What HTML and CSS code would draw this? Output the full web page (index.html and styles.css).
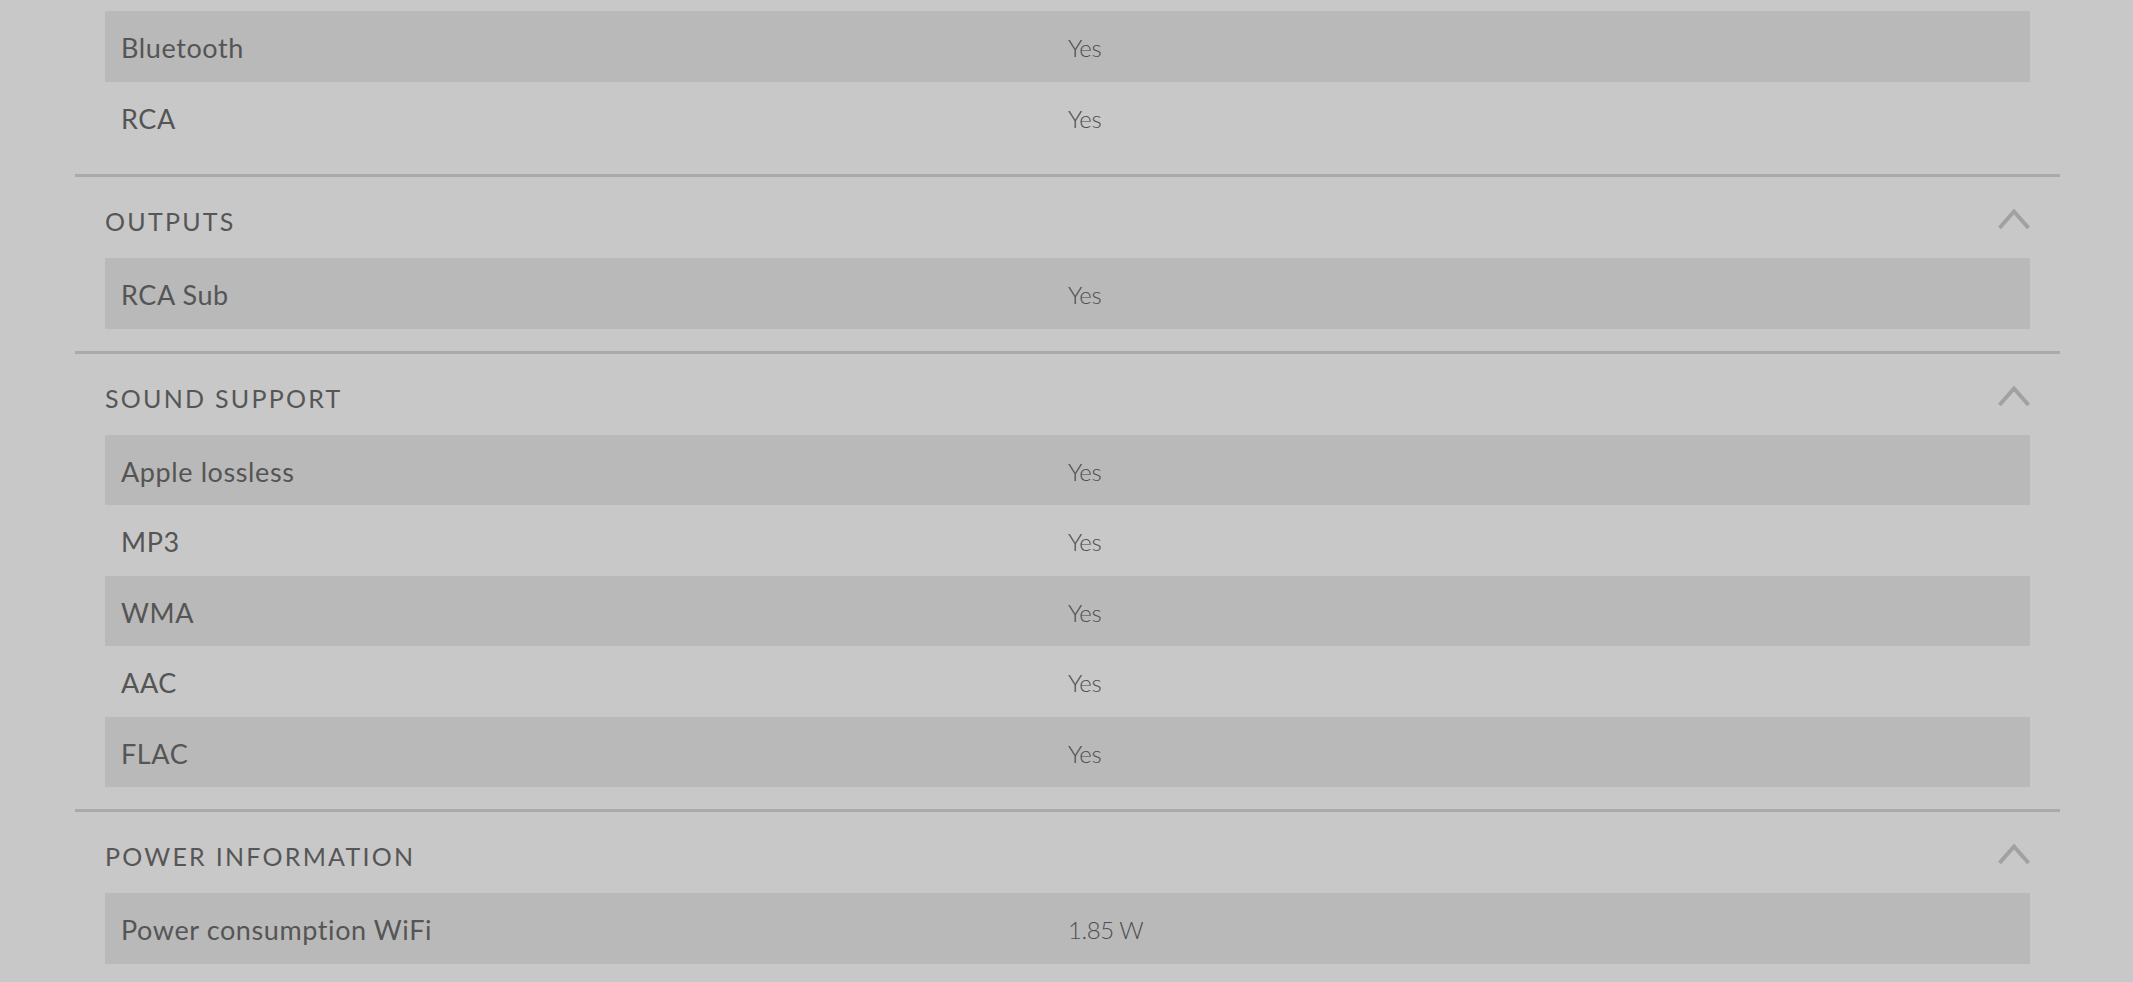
FILE: index.html
```html
<!DOCTYPE html>
<html lang="en">
<head>
<meta charset="utf-8">
<title>Specifications</title>
<link rel="stylesheet" href="styles.css">
</head>
<body>
<main class="specs">
  <section class="group group--first">
    <div class="rows">
      <div class="row"><span class="label">Bluetooth</span><span class="value">Yes</span></div>
      <div class="row"><span class="label">RCA</span><span class="value">Yes</span></div>
    </div>
  </section>

  <section class="group">
    <header class="group-head">
      <h3 class="group-title">Outputs</h3>
      <svg class="chev" viewBox="0 0 32 30" width="32" height="30" aria-hidden="true"><path d="M1.5 22 L16 5.5 L30.5 22"/></svg>
    </header>
    <div class="rows">
      <div class="row"><span class="label">RCA Sub</span><span class="value">Yes</span></div>
    </div>
  </section>

  <section class="group">
    <header class="group-head">
      <h3 class="group-title">Sound support</h3>
      <svg class="chev" viewBox="0 0 32 30" width="32" height="30" aria-hidden="true"><path d="M1.5 22 L16 5.5 L30.5 22"/></svg>
    </header>
    <div class="rows">
      <div class="row"><span class="label">Apple lossless</span><span class="value">Yes</span></div>
      <div class="row"><span class="label">MP3</span><span class="value">Yes</span></div>
      <div class="row"><span class="label">WMA</span><span class="value">Yes</span></div>
      <div class="row"><span class="label">AAC</span><span class="value">Yes</span></div>
      <div class="row"><span class="label">FLAC</span><span class="value">Yes</span></div>
    </div>
  </section>

  <section class="group">
    <header class="group-head">
      <h3 class="group-title">Power information</h3>
      <svg class="chev" viewBox="0 0 32 30" width="32" height="30" aria-hidden="true"><path d="M1.5 22 L16 5.5 L30.5 22"/></svg>
    </header>
    <div class="rows">
      <div class="row"><span class="label">Power consumption WiFi</span><span class="value">1.85 W</span></div>
    </div>
  </section>
</main>
</body>
</html>
```

FILE: styles.css
```css
html {
  overflow: hidden;
  background: #c8c8c8;
}
body {
  margin: 0;
  background: #c8c8c8;
  font-family: Lato, "Open Sans", "Liberation Sans", sans-serif;
  color: #565656;
}
.specs {
  margin-left: 75px;
  width: 1985px;
}
.group {
  border-top: 3px solid #aaaaaa;
  padding-bottom: 22px;
}
.group--first {
  border-top: none;
  padding-top: 11px;
}
.group-head {
  display: flex;
  justify-content: space-between;
  align-items: flex-start;
  padding: 29px 30px 22px;
}
.group-title {
  margin: 0;
  font-size: 25px;
  line-height: 30px;
  font-weight: 400;
  letter-spacing: 2.25px;
  text-transform: uppercase;
  color: #565656;
}
.chev {
  display: block;
  fill: none;
  stroke: #a1a1a1;
  stroke-width: 4;
}
.rows {
  margin: 0 30px;
}
.row {
  display: grid;
  grid-template-columns: 963px 1fr;
  box-sizing: border-box;
  height: 70.5px;
  padding-top: 3px;
  line-height: 67.5px;
}
.row:nth-child(odd) {
  background: #b9b9b9;
}
.label {
  padding-left: 16px;
  font-size: 27px;
  font-weight: 400;
  letter-spacing: 0.6px;
  color: #555555;
}
.value {
  font-size: 24px;
  font-weight: 300;
  letter-spacing: -0.4px;
  color: #4e4e4e;
}
```
